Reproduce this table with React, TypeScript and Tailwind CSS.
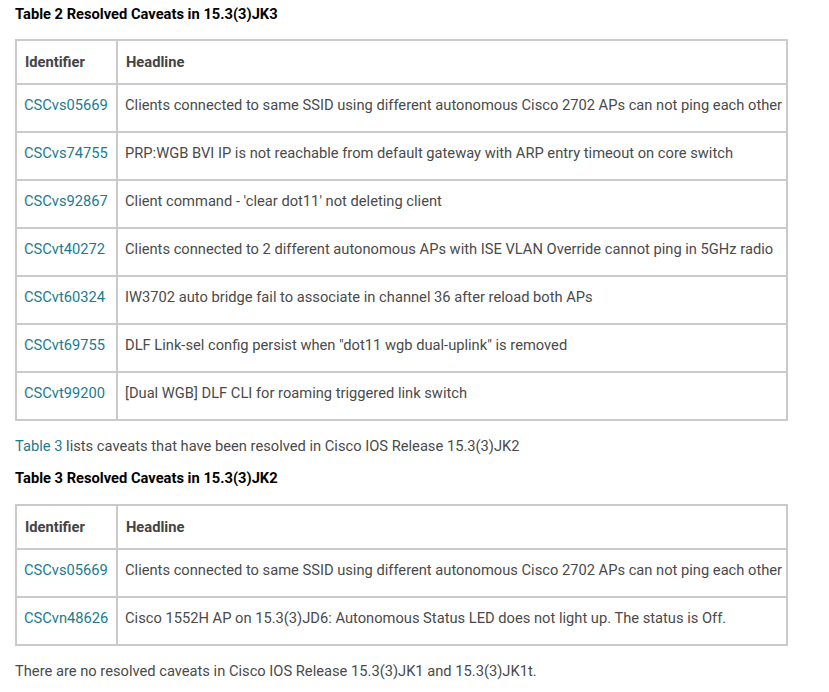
const table2 = [
  ["CSCvs05669", "Clients connected to same SSID using different autonomous Cisco 2702 APs can not ping each other"],
  ["CSCvs74755", "PRP:WGB BVI IP is not reachable from default gateway with ARP entry timeout on core switch"],
  ["CSCvs92867", "Client command - 'clear dot11' not deleting client"],
  ["CSCvt40272", "Clients connected to 2 different autonomous APs with ISE VLAN Override cannot ping in 5GHz radio"],
  ["CSCvt60324", "IW3702 auto bridge fail to associate in channel 36 after reload both APs"],
  ["CSCvt69755", "DLF Link-sel config persist when \"dot11 wgb dual-uplink\" is removed"],
  ["CSCvt99200", "[Dual WGB] DLF CLI for roaming triggered link switch"],
];

const table3 = [
  ["CSCvs05669", "Clients connected to same SSID using different autonomous Cisco 2702 APs can not ping each other"],
  ["CSCvn48626", "Cisco 1552H AP on 15.3(3)JD6: Autonomous Status LED does not light up. The status is Off."],
];

function CaveatTable({ rows }: { rows: string[][] }) {
  return (
    <table className="w-[773px] border-collapse table-fixed">
      <thead>
        <tr className="h-[44px]">
          <th className="w-[101px] border-2 border-[#cacaca] px-[8px] text-left font-bold text-[#444]">
            Identifier
          </th>
          <th className="border-2 border-[#cacaca] px-[8px] text-left font-bold text-[#444]">
            Headline
          </th>
        </tr>
      </thead>
      <tbody>
        {rows.map(([id, text]) => (
          <tr key={id + text} className="h-[48px]">
            <td className="border-2 border-[#cacaca] px-[7px] pt-[10px] align-top">
              <a href="#" className="text-[#1a7b8f]">
                {id}
              </a>
            </td>
            <td className="border-2 border-[#cacaca] px-[7px] pt-[10px] align-top whitespace-nowrap text-[#4a4a4a]">
              {text}
            </td>
          </tr>
        ))}
      </tbody>
    </table>
  );
}

export default function App() {
  return (
    <div className="w-[829px] h-[692px] bg-white px-[15px] pt-[4px] font-['Roboto',sans-serif] text-[14.7px] leading-[20px] text-[#4a4a4a]">
      <h3 className="text-[14.7px] font-bold text-black">Table 2 Resolved Caveats in 15.3(3)JK3</h3>
      <div className="mt-[15px]">
        <CaveatTable rows={table2} />
      </div>
      <p className="mt-[15px]">
        <a href="#" className="text-[#1a7b8f]">Table 3</a> lists caveats that have been resolved in Cisco IOS Release 15.3(3)JK2
      </p>
      <h3 className="mt-[12px] text-[14.7px] font-bold text-black">Table 3 Resolved Caveats in 15.3(3)JK2</h3>
      <div className="mt-[16px]">
        <CaveatTable rows={table3} />
      </div>
      <p className="mt-[15px]">There are no resolved caveats in Cisco IOS Release 15.3(3)JK1 and 15.3(3)JK1t.</p>
    </div>
  );
}
